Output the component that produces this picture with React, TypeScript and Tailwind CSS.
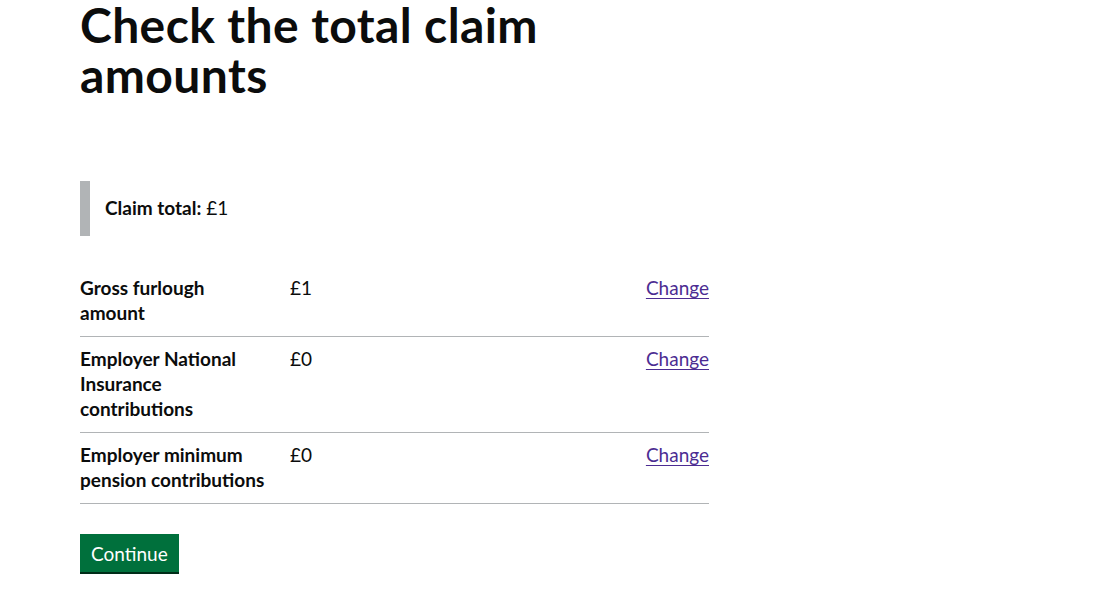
import React from 'react';

const rows = [
  { key: 'Gross furlough amount', value: '£1' },
  { key: 'Employer National Insurance contributions', value: '£0' },
  { key: 'Employer minimum pension contributions', value: '£0' },
];

export default function App() {
  return (
    <div className="min-h-screen bg-white text-[#0b0c0c] font-['Lato','Liberation_Sans',sans-serif]">
      <main className="pl-[80px] pt-0">
        <h1 className="w-[629px] text-[48px] leading-[50px] font-bold tracking-[0.4px] mb-[81px]">
          Check the total claim amounts
        </h1>

        <div className="border-l-[10px] border-[#b1b4b6] pl-[15px] pt-[14px] pb-[16px] text-[19px] leading-[25px] w-[629px]">
          <span className="font-bold">Claim total:</span> £1
        </div>

        <dl className="w-[629px] mt-[30px] text-[19px] leading-[25px]">
          {rows.map((row) => (
            <div
              key={row.key}
              className="grid grid-cols-[210px_1fr_auto] border-b border-[#b1b4b6] pt-[9px] pb-[11px]"
            >
              <dt className="font-bold pr-5">{row.key}</dt>
              <dd>{row.value}</dd>
              <dd className="text-right">
                <a href="#" className="text-[#4c2c92] underline underline-offset-[3px] decoration-1">
                  Change
                </a>
              </dd>
            </div>
          ))}
        </dl>

        <button
          type="button"
          className="mt-[30px] h-[38px] px-[11px] bg-[#00703c] text-white text-[19px] leading-[25px] shadow-[0_2px_0_#002d18]"
        >
          Continue
        </button>
      </main>
    </div>
  );
}
